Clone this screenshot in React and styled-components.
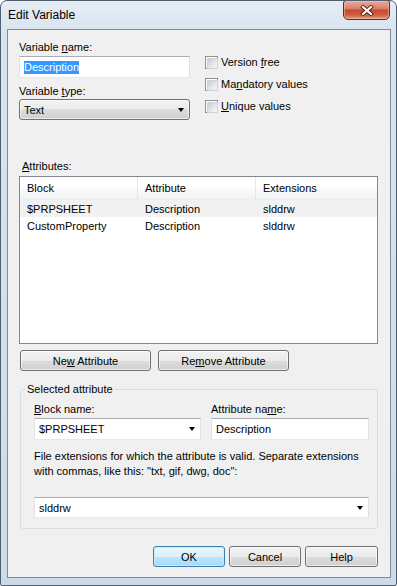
import React from 'react';
import styled, { createGlobalStyle } from 'styled-components';

const GlobalStyle = createGlobalStyle`
  html, body {
    margin: 0;
    padding: 0;
    background: #ffffff;
  }
  body {
    font-family: 'Segoe UI', 'Liberation Sans', Arial, sans-serif;
    font-size: 11px;
    color: #000;
  }
  * {
    box-sizing: border-box;
  }
`;

const Window = styled.div`
  width: 397px;
  height: 586px;
  border: 1px solid #4f5f72;
  border-radius: 7px 7px 2px 2px;
  background: linear-gradient(to bottom, #e6edf5 0%, #d9e4ef 30px, #cddbe9 100%);
  display: flex;
  flex-direction: column;
  overflow: hidden;
`;

const TitleBar = styled.div`
  height: 28px;
  flex-shrink: 0;
  display: flex;
  align-items: center;
  justify-content: space-between;
  padding: 0 6px 0 7px;
`;

const Title = styled.span`
  font-size: 12px;
  color: #000;
`;

const CloseButton = styled.div`
  align-self: flex-start;
  margin-top: -1px;
  width: 47px;
  height: 20px;
  border: 1px solid #6e2619;
  border-radius: 3px 3px 5px 5px;
  background: linear-gradient(to bottom, #e9a895 0%, #d98670 40%, #c64a30 52%, #cf5a3e 75%, #e39a7c 100%);
  box-shadow: inset 0 0 0 1px rgba(255, 210, 195, 0.45);
  display: flex;
  align-items: center;
  justify-content: center;
`;

const Client = styled.div`
  flex: 1;
  margin: 0 5px 7px 6px;
  border: 1px solid #7d8b9a;
  background: #f0f0f0;
  padding: 10px 12px 10px 11px;
  display: flex;
  flex-direction: column;
`;

const TopGrid = styled.div`
  display: grid;
  grid-template-columns: 171px 1fr;
  column-gap: 15px;
`;

const Column = styled.div`
  display: flex;
  flex-direction: column;
  padding-top: ${p => p.$top || 0}px;
  gap: ${p => p.$gap || 0}px;
`;

const Label = styled.label`
  display: block;
  height: 15px;
  line-height: 15px;
  margin-top: ${p => p.$mt || 0}px;
  margin-bottom: ${p => p.$mb || 0}px;
  margin-left: ${p => p.$ml || 0}px;
  white-space: nowrap;
`;

const TextBox = styled.div`
  height: ${p => p.$h || 22}px;
  margin-top: ${p => p.$mt || 0}px;
  background: #fff;
  border: 1px solid;
  border-color: #abadb3 #dbdfe6 #e3e9ef #e2e3ea;
  padding: 0 4px;
  display: flex;
  align-items: center;
  justify-content: space-between;
  white-space: nowrap;
`;

const Selected = styled.span`
  background: #3399ff;
  color: #fff;
  line-height: 13px;
`;

const DropDown = styled.div`
  height: 21px;
  border: 1px solid #707070;
  border-radius: 3px;
  background: linear-gradient(to bottom, #f2f2f2 0%, #ebebeb 50%, #dddddd 50%, #cfcfcf 100%);
  box-shadow: inset 0 0 0 1px rgba(255, 255, 255, 0.6);
  padding: 0 5px 0 4px;
  display: flex;
  align-items: center;
  justify-content: space-between;
`;

const Arrow = styled.span`
  width: 0;
  height: 0;
  border-left: 3.5px solid transparent;
  border-right: 3.5px solid transparent;
  border-top: 4px solid #000;
  margin-right: ${p => p.$mr || 0}px;
`;

const CheckRow = styled.div`
  display: flex;
  align-items: center;
  gap: 3px;
  height: 16px;
`;

const CheckBox = styled.span`
  width: 13px;
  height: 13px;
  border: 1px solid #8e8f8f;
  background: #fff;
  padding: 1px;
  flex-shrink: 0;

  &::after {
    content: '';
    display: block;
    width: 100%;
    height: 100%;
    border: 1px solid #cfd2d6;
    background: linear-gradient(135deg, #c7cbd1 0%, #e4e6e9 55%, #f6f6f6 100%);
  }
`;

const ListView = styled.div`
  height: 168px;
  margin-top: 2px;
  border: 1px solid #828790;
  background: #fff;
  display: flex;
  flex-direction: column;
`;

const HeaderRow = styled.div`
  display: grid;
  grid-template-columns: 118px 118px 1fr;
  height: 23px;
  background: linear-gradient(to bottom, #ffffff 0%, #ffffff 45%, #f7f8f9 60%, #f1f2f4 100%);
  border-bottom: 1px solid #eaecef;
`;

const HeaderCell = styled.div`
  display: flex;
  align-items: center;
  padding-left: 7px;
  border-right: 1px solid ${p => (p.$last ? 'transparent' : '#e3e5e8')};
`;

const Row = styled.div`
  display: grid;
  grid-template-columns: 118px 118px 1fr;
  height: 17px;
  background: ${p => (p.$active ? '#f1f1f1' : 'transparent')};
`;

const Cell = styled.div`
  display: flex;
  align-items: center;
  padding-left: 7px;
  white-space: nowrap;
`;

const ButtonRow = styled.div`
  display: flex;
  gap: 7px;
  margin: 6px 0 0 1px;
`;

const Button = styled.div`
  width: ${p => p.$w || 72}px;
  height: 21px;
  border: 1px solid ${p => (p.$default ? '#3c7fb1' : '#707070')};
  border-radius: 3px;
  background: ${p =>
    p.$default
      ? 'linear-gradient(to bottom, #eaf6fd 0%, #d9f0fc 50%, #bee6fd 50%, #a7d9f5 100%)'
      : 'linear-gradient(to bottom, #f2f2f2 0%, #ebebeb 50%, #dddddd 50%, #cfcfcf 100%)'};
  box-shadow: inset 0 0 0 1px ${p => (p.$default ? 'rgba(200, 235, 252, 0.9)' : 'rgba(255, 255, 255, 0.6)')};
  display: flex;
  align-items: center;
  justify-content: center;
  white-space: nowrap;
`;

const GroupBox = styled.div`
  margin: 18px 0 0 1px;
  border: 1px solid #d5dfe5;
  border-radius: 3px;
  padding: 0 8px 10px 13px;
  display: flex;
  flex-direction: column;
`;

const Caption = styled.span`
  align-self: flex-start;
  margin: -8px 0 0 -9px;
  padding: 0 2px;
  line-height: 15px;
  background: #f0f0f0;
`;

const FieldGrid = styled.div`
  display: grid;
  grid-template-columns: 167px 1fr;
  column-gap: 10px;
  margin-top: 5px;
`;

const Field = styled.div`
  display: flex;
  flex-direction: column;
`;

const Hint = styled.p`
  margin: 9px 0 0;
  line-height: 15px;
  white-space: nowrap;
`;

const Footer = styled.div`
  display: flex;
  justify-content: flex-end;
  gap: 4px;
  margin-top: 17px;
`;

function CloseGlyph() {
  return (
    <svg width="14" height="11" viewBox="0 0 14 11">
      <path d="M3 2 L11 9 M11 2 L3 9" stroke="#5b1f14" strokeWidth="4" strokeLinecap="square" fill="none" />
      <path d="M3 2 L11 9 M11 2 L3 9" stroke="#ffffff" strokeWidth="2.2" strokeLinecap="square" fill="none" />
    </svg>
  );
}

const rows = [
  { block: '$PRPSHEET', attribute: 'Description', ext: 'slddrw' },
  { block: 'CustomProperty', attribute: 'Description', ext: 'slddrw' },
];

export default function App() {
  return (
    <>
      <GlobalStyle />
      <Window>
        <TitleBar>
          <Title>Edit Variable</Title>
          <CloseButton>
            <CloseGlyph />
          </CloseButton>
        </TitleBar>

        <Client>
          <TopGrid>
            <Column>
              <Label $mb={1}>Variable <u>n</u>ame:</Label>
              <TextBox>
                <Selected>Description</Selected>
              </TextBox>
              <Label $mt={6}>Variable <u>t</u>ype:</Label>
              <DropDown>
                <span>Text</span>
                <Arrow />
              </DropDown>
            </Column>
            <Column $top={14} $gap={6}>
              <CheckRow>
                <CheckBox />
                <span>Version <u>f</u>ree</span>
              </CheckRow>
              <CheckRow>
                <CheckBox />
                <span>Ma<u>n</u>datory values</span>
              </CheckRow>
              <CheckRow>
                <CheckBox />
                <span><u>U</u>nique values</span>
              </CheckRow>
            </Column>
          </TopGrid>

          <Label $mt={39} $ml={3}><u>A</u>ttributes:</Label>
          <ListView>
            <HeaderRow>
              <HeaderCell>Block</HeaderCell>
              <HeaderCell>Attribute</HeaderCell>
              <HeaderCell $last>Extensions</HeaderCell>
            </HeaderRow>
            {rows.map((r, i) => (
              <Row key={r.block} $active={i === 0}>
                <Cell>{r.block}</Cell>
                <Cell>{r.attribute}</Cell>
                <Cell>{r.ext}</Cell>
              </Row>
            ))}
          </ListView>

          <ButtonRow>
            <Button $w={131}><span>Ne<u>w</u> Attribute</span></Button>
            <Button $w={131}><span>Re<u>m</u>ove Attribute</span></Button>
          </ButtonRow>

          <GroupBox>
            <Caption>Selected attribute</Caption>
            <FieldGrid>
              <Field>
                <Label $mb={1}><u>B</u>lock name:</Label>
                <TextBox>
                  <span>$PRPSHEET</span>
                  <Arrow $mr={1} />
                </TextBox>
              </Field>
              <Field>
                <Label $mb={1}>Attribute na<u>m</u>e:</Label>
                <TextBox>
                  <span>Description</span>
                </TextBox>
              </Field>
            </FieldGrid>
            <Hint>
              File extensions for which the attribute is valid. Separate extensions
              <br />
              with commas, like this: "txt, gif, dwg, doc":
            </Hint>
            <TextBox $h={21} $mt={18}>
              <span>slddrw</span>
              <Arrow $mr={1} />
            </TextBox>
          </GroupBox>

          <Footer>
            <Button $default>OK</Button>
            <Button>Cancel</Button>
            <Button $w={73}>Help</Button>
          </Footer>
        </Client>
      </Window>
    </>
  );
}
